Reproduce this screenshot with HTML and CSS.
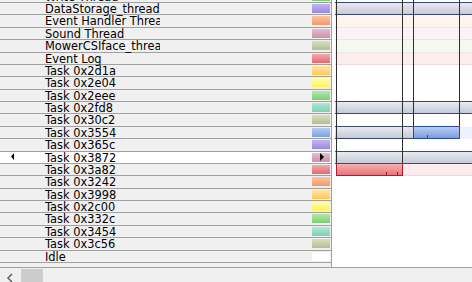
FILE: index.html
```html
<!DOCTYPE html>
<html lang="en">
<head>
    <meta charset="UTF-8">
    <title>Task timeline</title>
    <link rel="stylesheet" href="styles.css">
</head>
<body>
    <div class="view">
        <div class="panes">
            <div class="tasks">
                <div class="list">
                    <div class="row"><span class="mark"></span><span class="name">Write Thread</span><span class="swatch green"></span></div>
                    <div class="row"><span class="mark"></span><span class="name">DataStorage_thread</span><span class="swatch purple"></span></div>
                    <div class="row"><span class="mark"></span><span class="name">Event Handler Thread</span><span class="swatch orange"></span></div>
                    <div class="row"><span class="mark"></span><span class="name">Sound Thread</span><span class="swatch pink"></span></div>
                    <div class="row"><span class="mark"></span><span class="name">MowerCSIface_thread</span><span class="swatch olive"></span></div>
                    <div class="row"><span class="mark"></span><span class="name">Event Log</span><span class="swatch red"></span></div>
                    <div class="row"><span class="mark"></span><span class="name">Task 0x2d1a</span><span class="swatch amber"></span></div>
                    <div class="row"><span class="mark"></span><span class="name">Task 0x2e04</span><span class="swatch yellow"></span></div>
                    <div class="row"><span class="mark"></span><span class="name">Task 0x2eee</span><span class="swatch green"></span></div>
                    <div class="row"><span class="mark"></span><span class="name">Task 0x2fd8</span><span class="swatch teal"></span></div>
                    <div class="row"><span class="mark"></span><span class="name">Task 0x30c2</span><span class="swatch olive"></span></div>
                    <div class="row"><span class="mark"></span><span class="name">Task 0x3554</span><span class="swatch blue"></span></div>
                    <div class="row"><span class="mark"></span><span class="name">Task 0x365c</span><span class="swatch purple"></span></div>
                    <div class="row selected">
                        <span class="mark"><svg class="tri-left" width="3" height="7" viewBox="0 0 3 7"><polygon points="0,3.5 3,0 3,7" fill="#000"/></svg></span>
                        <span class="name">Task 0x3872</span>
                        <span class="swatch pink"><svg class="tri-right" width="4" height="8" viewBox="0 0 4 8"><polygon points="0,0 4,4 0,8" fill="#000"/></svg></span>
                    </div>
                    <div class="row"><span class="mark"></span><span class="name">Task 0x3a82</span><span class="swatch red"></span></div>
                    <div class="row"><span class="mark"></span><span class="name">Task 0x3242</span><span class="swatch orange"></span></div>
                    <div class="row"><span class="mark"></span><span class="name">Task 0x3998</span><span class="swatch amber"></span></div>
                    <div class="row"><span class="mark"></span><span class="name">Task 0x2c00</span><span class="swatch yellow"></span></div>
                    <div class="row"><span class="mark"></span><span class="name">Task 0x332c</span><span class="swatch green"></span></div>
                    <div class="row"><span class="mark"></span><span class="name">Task 0x3454</span><span class="swatch teal"></span></div>
                    <div class="row"><span class="mark"></span><span class="name">Task 0x3c56</span><span class="swatch olive"></span></div>
                    <div class="row"><span class="mark"></span><span class="name">Idle</span><span class="swatch white"></span></div>
                    <div class="row last"></div>
                </div>
            </div>

            <div class="timeline">
                <div class="list">
                    <div class="trow"></div>
                    <div class="trow"><div class="bar"></div></div>
                    <div class="trow"><div class="tint t-orange"></div></div>
                    <div class="trow"><div class="tint t-pink"></div></div>
                    <div class="trow"><div class="tint t-olive"></div></div>
                    <div class="trow"><div class="tint t-red"></div></div>
                    <div class="trow"></div>
                    <div class="trow"></div>
                    <div class="trow"></div>
                    <div class="trow"><div class="bar"></div></div>
                    <div class="trow"></div>
                    <div class="trow">
                        <div class="bar gray-lead"></div>
                        <div class="event ev-blue"><span class="tick" style="left: 13px"></span></div>
                        <div class="tint t-blue"></div>
                    </div>
                    <div class="trow"></div>
                    <div class="trow"><div class="bar"></div></div>
                    <div class="trow">
                        <div class="event ev-red"><span class="tick" style="left: 49px"></span><span class="tick" style="left: 60px"></span></div>
                        <div class="tint t-red"></div>
                    </div>
                </div>
                <span class="vline long" style="left: 4px"></span>
                <span class="vline long" style="left: 70px"></span>
                <span class="vline short" style="left: 81px"></span>
                <span class="vline short" style="left: 127px"></span>
            </div>
        </div>

        <div class="hscroll">
            <svg class="arrow" width="17" height="14" viewBox="0 0 17 14"><polyline points="12,6 8,10 12,14" fill="none" stroke="#606060" stroke-width="1.5"/></svg>
            <div class="thumb"></div>
        </div>
    </div>
</body>
</html>
```

FILE: styles.css
```css
body {
    margin: 0;
    font-family: "DejaVu Sans", sans-serif;
    font-size: 11.4px;
    color: #000;
    background: #f0f0f0;
    overflow: hidden;
}
.view {
    width: 472px;
    height: 282px;
    display: flex;
    flex-direction: column;
}
.panes {
    flex: none;
    height: 267px;
    display: flex;
    border-bottom: 1px solid #a0a0a0;
    overflow: hidden;
}

/* task list */
.tasks {
    width: 331px;
    flex: none;
    border-right: 1px solid #a0a0a0;
    background: #f0f0f0;
}
.list {
    margin-top: -9.38px;
}
.row {
    height: 12.38px;
    box-sizing: border-box;
    border-bottom: 1px solid #a0a0a0;
    display: flex;
    align-items: flex-start;
}
.row.selected {
    background: #fff;
}
.row.last {
    border-bottom: none;
}
.mark {
    width: 45px;
    flex: none;
    display: flex;
}
.tri-left {
    margin: 1.5px 0 0 11px;
}
.name {
    width: 115px;
    flex: none;
    white-space: nowrap;
    overflow-x: clip;
    line-height: 11.38px;
    padding-top: 1px;
}
.swatch {
    position: relative;
    margin: 1px 1px 0 auto;
    width: 18px;
    height: 9px;
}
.tri-right {
    position: absolute;
    left: 8px;
    top: 0;
}
.green { background: linear-gradient(#b0e8a8, #80cc78); }
.purple { background: linear-gradient(#c4b4f2, #9a88dc); }
.orange { background: linear-gradient(#fdc4a0, #f49868); }
.pink { background: linear-gradient(#e6bcd0, #cc90a8); }
.olive { background: linear-gradient(#d8e0bc, #b0c090); }
.red { background: linear-gradient(#f6a8ac, #e06a72); }
.amber { background: linear-gradient(#ffe4a0, #ffc858); }
.yellow { background: linear-gradient(#ffffa8, #fff060); }
.teal { background: linear-gradient(#ace8d4, #80d0b0); }
.blue { background: linear-gradient(#b4ccf4, #80a0e0); }
.white { background: #fff; }

/* timeline */
.timeline {
    flex: 1;
    position: relative;
    background: #fff;
    padding-left: 3px;
}
.trow {
    height: 12.38px;
    display: flex;
}
.bar {
    flex: 1;
    height: 13.38px;
    margin-top: -1px;
    box-sizing: border-box;
    border-top: 1px solid #3c4a6c;
    border-bottom: 1px solid #3c4a6c;
    background: linear-gradient(#e8eaf2, #c6cad8);
}
.bar.gray-lead {
    flex: none;
    width: 78px;
}
.event {
    position: relative;
    z-index: 2;
    flex: none;
    height: 13.38px;
    margin-top: -1px;
    box-sizing: border-box;
}
.ev-blue {
    width: 47px;
    border: 1px solid #2c4c98;
    background: linear-gradient(#b8cff6, #7c9ce0);
}
.ev-red {
    width: 67px;
    margin-left: 1px;
    border: 1px solid #b01c2c;
    background: linear-gradient(#f6b0b0, #e87478);
}
.tick {
    position: absolute;
    bottom: 0;
    width: 1px;
    height: 3px;
}
.ev-blue .tick { background: #2c4c98; }
.ev-red .tick { background: #a01828; }
.tint {
    flex: 1;
    box-sizing: border-box;
    border-bottom: 1px solid transparent;
}
.t-orange { background: #fdf4ec; border-color: #f8e6da; }
.t-pink { background: #f9f2f6; border-color: #f0e2ea; }
.t-olive { background: #f5f7f1; border-color: #eaeee2; }
.t-red { background: #fcecee; border-color: #f4d6da; }
.t-blue { background: #eef2fc; }
.vline {
    position: absolute;
    top: 0;
    width: 1px;
    background: #2e2e2e;
    z-index: 1;
}
.vline.long { height: 175px; }
.vline.short { height: 138px; }

/* horizontal scrollbar */
.hscroll {
    flex: 1;
    display: flex;
    background: #f0f0f0;
}
.arrow {
    flex: none;
}
.thumb {
    margin: 1px 0 0 4px;
    width: 22px;
    background: #cdcdcd;
}
```
